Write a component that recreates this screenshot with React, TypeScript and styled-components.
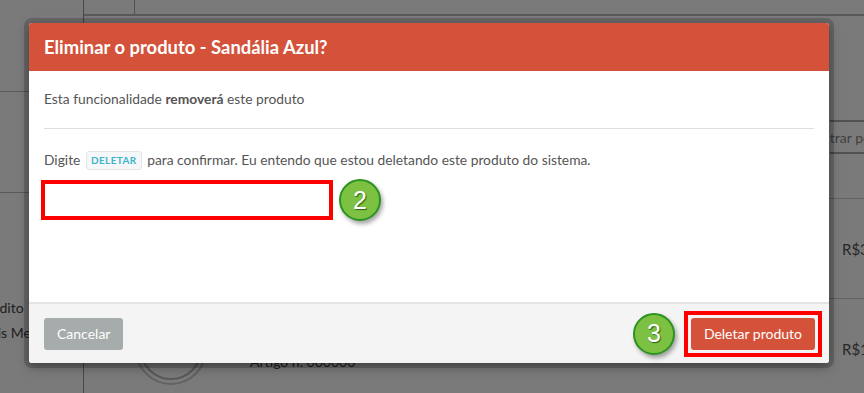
import styled, { createGlobalStyle } from "styled-components";

const GlobalStyle = createGlobalStyle`
  html, body {
    margin: 0;
    padding: 0;
    width: 864px;
    height: 393px;
    overflow: hidden;
    font-family: Lato, "Open Sans", "Liberation Sans", sans-serif;
  }
  * { box-sizing: border-box; }
`;

/* ---------- page behind the overlay ---------- */

const Page = styled.div`
  position: relative;
  width: 864px;
  height: 393px;
  overflow: hidden;
  display: grid;
  grid-template-columns: 84px 1fr;
  background: #fff;
  color: #444;
  font-size: 14px;
`;

const Sidebar = styled.aside`
  border-right: 1px solid #999;
  display: flex;
  flex-direction: column;
`;

const SideBlock = styled.div<{ $h: number }>`
  height: ${(p) => p.$h}px;
  border-bottom: 1px solid #bbb;
`;

const SideItem = styled.div`
  padding: 0 0 8px 0;
  margin-left: -22px;
  white-space: nowrap;
  font-size: 14px;
  line-height: 17px;
`;

const Main = styled.main`
  display: flex;
  flex-direction: column;
`;

const TopBar = styled.div`
  height: 16px;
  border-bottom: 2px solid #bbb;
  display: grid;
  grid-template-columns: 51px 1fr;
  & > div:first-child { border-right: 1px solid #aaa; }
`;

const Toolbar = styled.div`
  height: 182px;
  display: flex;
  justify-content: flex-end;
  align-items: flex-start;
  padding-top: 104px;
`;

const Search = styled.div`
  width: 34px;
  height: 34px;
  border-top: 2px solid #aaa;
  border-bottom: 2px solid #aaa;
  display: flex;
  align-items: center;
  color: #888;
  white-space: nowrap;
  overflow: hidden;
  & > span { margin-left: -27px; }
`;

const Row = styled.div`
  height: 100px;
  border-top: 1px solid #ccc;
  display: grid;
  grid-template-columns: 140px 1fr 22px;
  align-items: center;
`;

const Price = styled.div`
  font-size: 15px;
  color: #555;
  white-space: nowrap;
`;

const Thumb = styled.div`
  width: 62px;
  height: 62px;
  margin-left: 56px;
  border-radius: 50%;
  border: 2px solid #bbb;
  box-shadow: 0 0 0 3px #fff, 0 0 0 5px #ccc;
`;

const Caption = styled.div`
  padding: 26px 0 0 26px;
  white-space: nowrap;
`;

const Overlay = styled.div`
  position: absolute;
  inset: 0;
  background: rgba(0, 0, 0, 0.52);
`;

/* ---------- modal ---------- */

const Modal = styled.div`
  position: absolute;
  left: 29px;
  top: 23px;
  width: 800px;
  border-radius: 3px;
  background: #fff;
  box-shadow: 0 0 0 5px rgba(0, 0, 0, 0.17), 0 4px 12px rgba(0, 0, 0, 0.35);
  display: flex;
  flex-direction: column;
`;

const Header = styled.div`
  height: 48px;
  background: #d4523a;
  border-radius: 3px 3px 0 0;
  display: flex;
  align-items: center;
  padding: 0 15px;
  color: #fff;
  font-size: 18.4px;
  font-weight: 700;
`;

const Body = styled.div`
  height: 231px;
  padding: 18px 15px 0;
  color: #555;
  font-size: 13.8px;
`;

const Line = styled.p`
  margin: 0;
  line-height: 20px;
`;

const Divider = styled.hr`
  border: 0;
  border-top: 1px solid #dcdfdf;
  margin: 19px 0 21px;
`;

const Code = styled.span`
  display: inline-block;
  padding: 0 4px;
  margin: 0 2px;
  line-height: 17px;
  border: 1px solid #e1e5e7;
  border-radius: 3px;
  background: #f5f7f8;
  color: #3db3cc;
  font-size: 10px;
  font-weight: 700;
  letter-spacing: 0.4px;
  vertical-align: 1px;
`;

const InputRow = styled.div`
  display: flex;
  align-items: center;
  gap: 10px;
  margin-top: 9px;
`;

const Input = styled.input`
  width: 284px;
  height: 32px;
  margin-left: 1px;
  border: 0;
  outline: 4px solid #ff0000;
  background: #fff;
  padding: 0 8px;
  font: inherit;
`;

const Step = styled.div`
  width: 42px;
  height: 42px;
  border-radius: 50%;
  background: #7dc142;
  border: 2px solid #2b9320;
  box-shadow: 2px 3px 4px rgba(0, 0, 0, 0.35);
  display: flex;
  align-items: center;
  justify-content: center;
  color: #fff;
  font-family: "Liberation Sans", Arial, sans-serif;
  font-size: 25px;
  text-shadow: 1px 1px 1px rgba(0, 60, 0, 0.7);
`;

const Footer = styled.div`
  height: 61px;
  border-top: 2px solid #e3e3e3;
  background: #f4f4f4;
  border-radius: 0 0 3px 3px;
  display: flex;
  align-items: center;
  justify-content: space-between;
  padding: 0 14px 0 15px;
`;

const Actions = styled.div`
  display: flex;
  align-items: center;
  gap: 16px;
`;

const Marked = styled.span`
  display: flex;
  margin: -7px;
  padding: 3px;
  border: 4px solid #ff0000;
`;

const Button = styled.button<{ $danger?: boolean }>`
  height: 32px;
  padding: 0 13px;
  border: 0;
  border-radius: 3px;
  background: ${(p) => (p.$danger ? "#d4523a" : "#a5acab")};
  color: #fff;
  font-family: inherit;
  font-size: 14px;
`;

export default function App() {
  return (
    <>
      <GlobalStyle />
      <Page>
        <Sidebar>
          <SideBlock $h={92} />
          <SideBlock $h={101} />
          <div style={{ height: 106 }} />
          <SideItem>Crédito</SideItem>
          <SideItem>Mais Meres</SideItem>
        </Sidebar>
        <Main>
          <TopBar>
            <div />
            <div />
          </TopBar>
          <Toolbar>
            <Search>
              <span>Mostrar por</span>
            </Search>
          </Toolbar>
          <Row>
            <div />
            <div />
            <Price>R$39,90</Price>
          </Row>
          <Row>
            <Thumb />
            <Caption>Artigo n. 000000</Caption>
            <Price>R$19,90</Price>
          </Row>
        </Main>
        <Overlay />

        <Modal>
          <Header>Eliminar o produto - Sandália Azul?</Header>
          <Body>
            <Line>
              Esta funcionalidade <b>removerá</b> este produto
            </Line>
            <Divider />
            <Line>
              Digite <Code>DELETAR</Code> para confirmar. Eu entendo que estou
              deletando este produto do sistema.
            </Line>
            <InputRow>
              <Input />
              <Step>2</Step>
            </InputRow>
          </Body>
          <Footer>
            <Button>Cancelar</Button>
            <Actions>
              <Step>3</Step>
              <Marked>
                <Button $danger>Deletar produto</Button>
              </Marked>
            </Actions>
          </Footer>
        </Modal>
      </Page>
    </>
  );
}
